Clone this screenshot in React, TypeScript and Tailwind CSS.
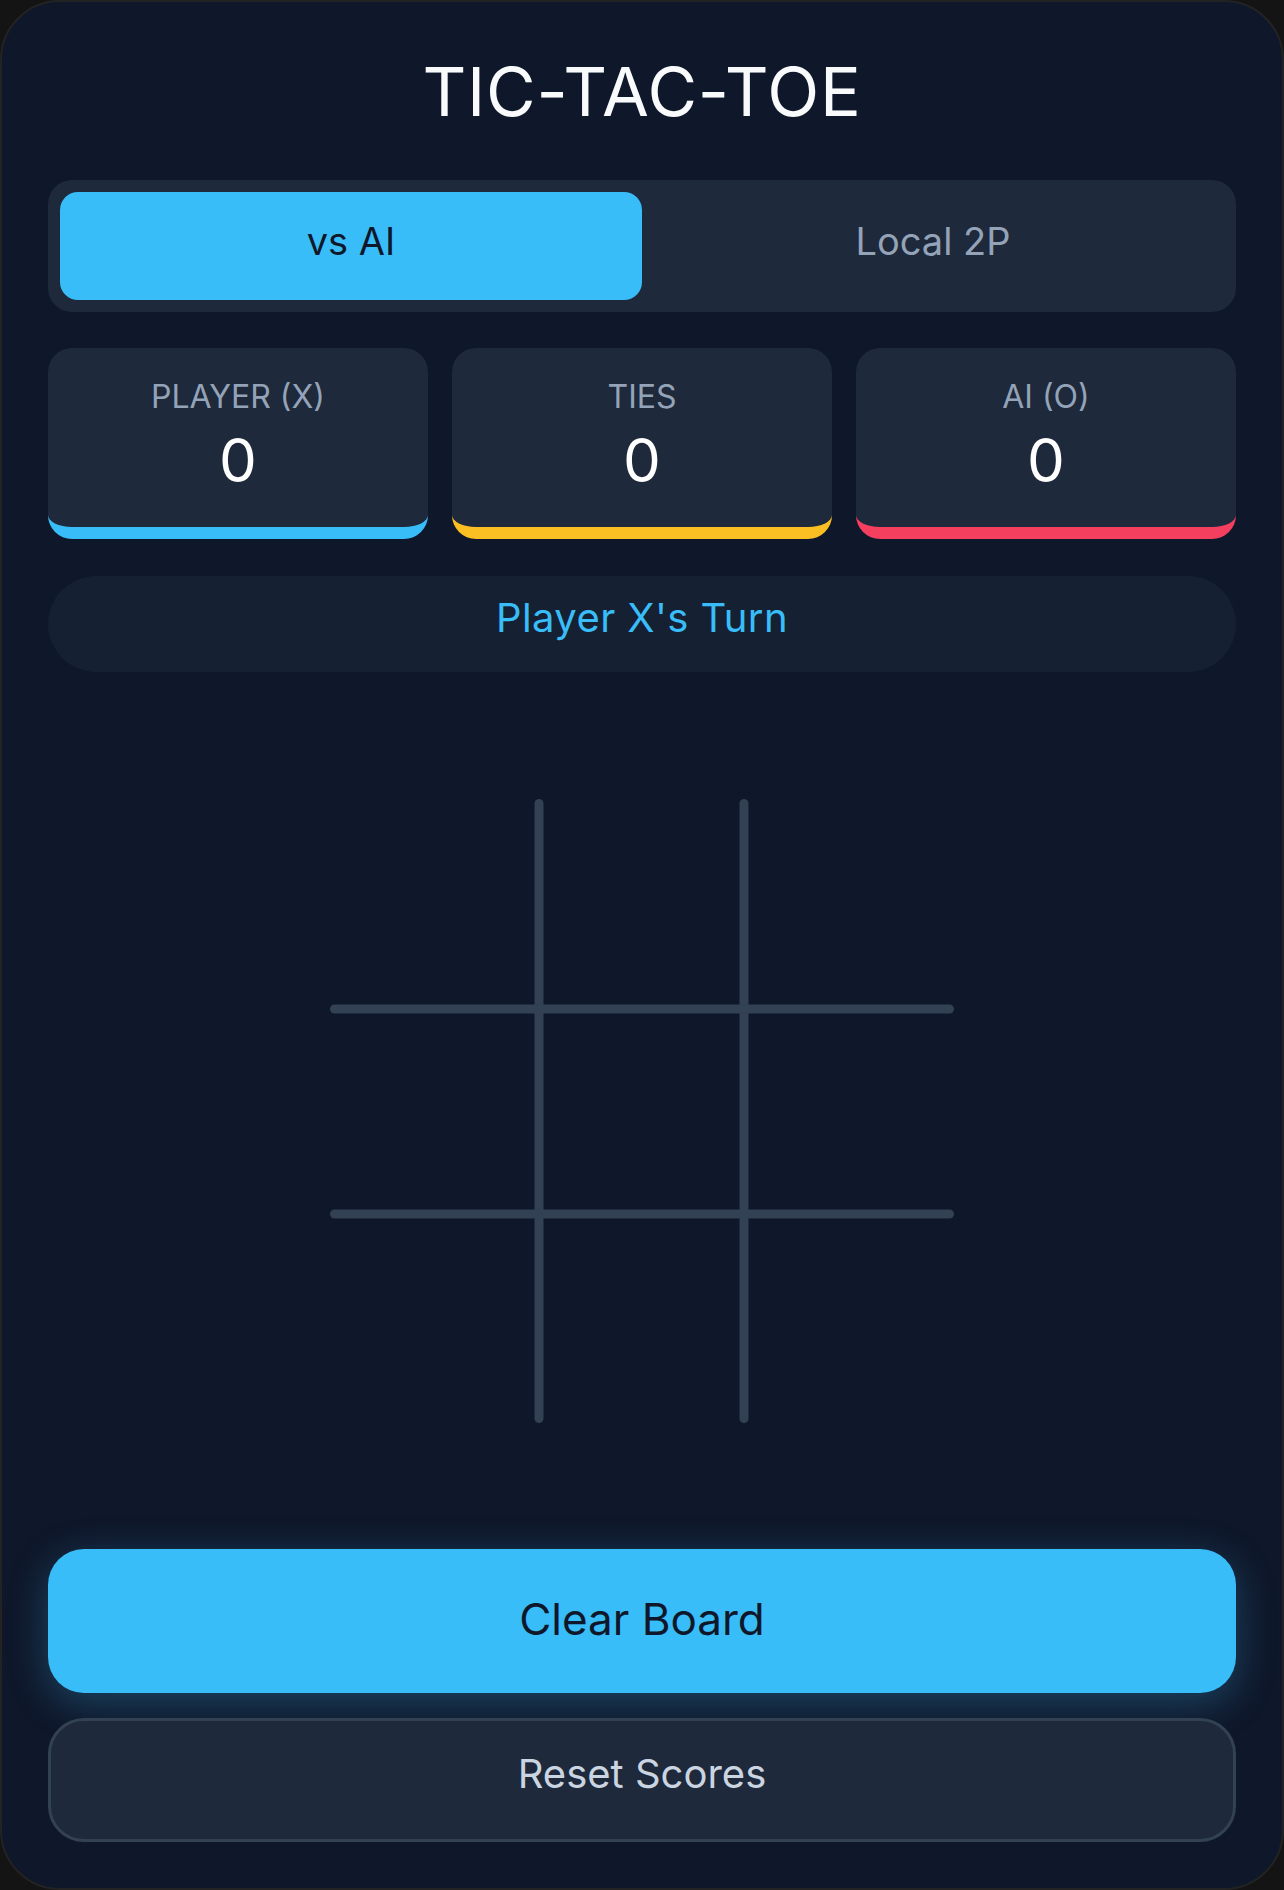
import { useState } from 'react';

type Cell = 'X' | 'O' | null;
type Mode = 'ai' | 'local';

const LINES = [
  [0, 1, 2], [3, 4, 5], [6, 7, 8],
  [0, 3, 6], [1, 4, 7], [2, 5, 8],
  [0, 4, 8], [2, 4, 6],
];

const winnerOf = (cells: Cell[]) => {
  for (const [a, b, c] of LINES) {
    if (cells[a] && cells[a] === cells[b] && cells[a] === cells[c]) return cells[a];
  }
  return null;
};

const App = () => {
  const [mode, setMode] = useState<Mode>('ai');
  const [cells, setCells] = useState<Cell[]>(Array(9).fill(null));
  const [turn, setTurn] = useState<'X' | 'O'>('X');
  const [scores, setScores] = useState({ x: 0, ties: 0, o: 0 });

  const winner = winnerOf(cells);
  const full = cells.every(Boolean);

  const finish = (next: Cell[]) => {
    const w = winnerOf(next);
    if (w === 'X') setScores((s) => ({ ...s, x: s.x + 1 }));
    else if (w === 'O') setScores((s) => ({ ...s, o: s.o + 1 }));
    else if (next.every(Boolean)) setScores((s) => ({ ...s, ties: s.ties + 1 }));
    return Boolean(w) || next.every(Boolean);
  };

  const play = (i: number) => {
    if (cells[i] || winner) return;
    const next = [...cells];
    next[i] = turn;
    if (finish(next)) {
      setCells(next);
      return;
    }
    if (mode === 'ai') {
      const free = next.map((c, idx) => (c ? -1 : idx)).filter((idx) => idx >= 0);
      const pick = free.find((idx) => {
        const t = [...next];
        t[idx] = 'O';
        return winnerOf(t) === 'O';
      }) ?? free.find((idx) => {
        const t = [...next];
        t[idx] = 'X';
        return winnerOf(t) === 'X';
      }) ?? (next[4] ? free[0] : 4);
      next[pick] = 'O';
      finish(next);
      setCells(next);
      return;
    }
    setCells(next);
    setTurn(turn === 'X' ? 'O' : 'X');
  };

  const clearBoard = () => {
    setCells(Array(9).fill(null));
    setTurn('X');
  };

  const status = winner
    ? `Player ${winner} Wins`
    : full
      ? "It's a Tie"
      : `Player ${turn}'s Turn`;

  return (
    <div className="min-h-screen bg-[#141414] font-['Inter','Liberation_Sans',sans-serif]">
      <div className="flex h-[1890px] flex-col rounded-[60px] border-2 border-[#232323] bg-[#0f172a] px-[46px] pt-[46px] pb-[46px]">
        <h1 className="text-center text-[68px] leading-[86px] font-normal tracking-[0.01em] text-[#f8fafc]">
          TIC-TAC-TOE
        </h1>

        {/* Mode toggle */}
        <div className="mt-[46px] grid h-[132px] grid-cols-2 rounded-[24px] bg-[#1e293b] p-[12px]">
          <button
            onClick={() => setMode('ai')}
            className={`rounded-[18px] pb-[10px] text-[38px] ${mode === 'ai' ? 'bg-[#38bdf8] text-[#0f172a]' : 'text-[#94a3b8]'}`}
          >
            vs AI
          </button>
          <button
            onClick={() => setMode('local')}
            className={`rounded-[18px] pb-[10px] text-[38px] ${mode === 'local' ? 'bg-[#38bdf8] text-[#0f172a]' : 'text-[#94a3b8]'}`}
          >
            Local 2P
          </button>
        </div>

        {/* Scores */}
        <div className="mt-[36px] grid grid-cols-3 gap-[24px]">
          <div className="h-[191px] rounded-[24px] border-b-[12px] border-[#38bdf8] bg-[#1e293b] pt-[29px] text-center">
            <p className="text-[32px] leading-[39px] text-[#94a3b8]">PLAYER (X)</p>
            <p className="mt-[8px] text-[60px] leading-[72px] text-white">{scores.x}</p>
          </div>
          <div className="h-[191px] rounded-[24px] border-b-[12px] border-[#fbbf24] bg-[#1e293b] pt-[29px] text-center">
            <p className="text-[32px] leading-[39px] text-[#94a3b8]">TIES</p>
            <p className="mt-[8px] text-[60px] leading-[72px] text-white">{scores.ties}</p>
          </div>
          <div className="h-[191px] rounded-[24px] border-b-[12px] border-[#f43f5e] bg-[#1e293b] pt-[29px] text-center">
            <p className="text-[32px] leading-[39px] text-[#94a3b8]">{mode === 'ai' ? 'AI (O)' : 'PLAYER (O)'}</p>
            <p className="mt-[8px] text-[60px] leading-[72px] text-white">{scores.o}</p>
          </div>
        </div>

        {/* Status */}
        <div className="mt-[37px] flex h-[96px] items-center justify-center rounded-full bg-[#1e293b]/50 pb-[12px]">
          <span className="text-[40px] tracking-[0.01em] text-[#38bdf8]">{status}</span>
        </div>

        {/* Board */}
        <div className="flex flex-1 items-center justify-center">
          <div className="relative h-[624px] w-[624px]">
            <svg className="absolute inset-0" width="624" height="624" viewBox="0 0 624 624">
              <g stroke="#334155" strokeWidth="9" strokeLinecap="round">
                <line x1="209" y1="4.5" x2="209" y2="619.5" />
                <line x1="414" y1="4.5" x2="414" y2="619.5" />
                <line x1="4.5" y1="210" x2="619.5" y2="210" />
                <line x1="4.5" y1="415" x2="619.5" y2="415" />
              </g>
            </svg>
            <div className="absolute inset-0 grid grid-cols-3 grid-rows-3">
              {cells.map((c, i) => (
                <button
                  key={i}
                  onClick={() => play(i)}
                  className={`flex items-center justify-center text-[120px] font-light ${c === 'X' ? 'text-[#38bdf8]' : 'text-[#f43f5e]'}`}
                >
                  {c}
                </button>
              ))}
            </div>
          </div>
        </div>

        {/* Actions */}
        <button
          onClick={clearBoard}
          className="h-[144px] rounded-[36px] bg-[#38bdf8] pb-[5px] text-[44px] text-[#0f172a] shadow-[0_10px_40px_rgba(56,189,248,0.28)]"
        >
          Clear Board
        </button>
        <button
          onClick={() => {
            setScores({ x: 0, ties: 0, o: 0 });
            clearBoard();
          }}
          className="mt-[25px] h-[124px] rounded-[36px] border-[3px] border-[#334155] bg-[#1e293b] pb-[12px] text-[40px] text-[#cbd5e1]"
        >
          Reset Scores
        </button>
      </div>
    </div>
  );
};

export default App;
